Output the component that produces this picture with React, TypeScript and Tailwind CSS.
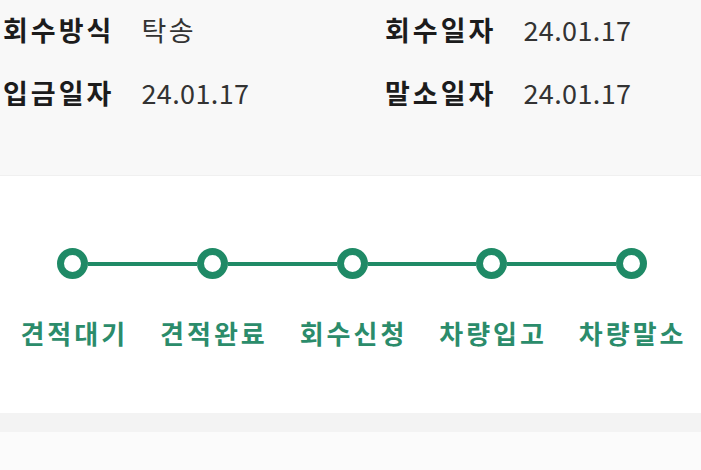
import React from "react";

const steps = ["견적대기", "견적완료", "회수신청", "차량입고", "차량말소"];

function InfoItem({ label, value }: { label: string; value: string }) {
  return (
    <div className="flex items-center gap-[27px] h-[40px]">
      <span className="font-bold text-[#1c1c1c] tracking-[3px]">{label}</span>
      <span className="font-normal text-[#333333] tracking-[2.5px] [&.num]:tracking-[0.4px]">{value}</span>
    </div>
  );
}

function InfoNum({ label, value }: { label: string; value: string }) {
  return (
    <div className="flex items-center gap-[27px] h-[40px]">
      <span className="font-bold text-[#1c1c1c] tracking-[3px]">{label}</span>
      <span className="font-normal text-[#333333] tracking-[0.4px]">{value}</span>
    </div>
  );
}

export default function App() {
  return (
    <div
      className="w-[701px] h-[470px] overflow-hidden bg-[#fbfbfb]"
      style={{ fontFamily: '"Noto Sans CJK KR", "Noto Sans", sans-serif' }}
    >
      <div className="h-[175px] bg-[#f8f8f8] pt-[10px] text-[27px] leading-[40px]">
        <div className="grid grid-cols-[382px_1fr] gap-y-[23px] pl-[3px]">
          <InfoItem label="회수방식" value="탁송" />
          <InfoNum label="회수일자" value="24.01.17" />
          <InfoNum label="입금일자" value="24.01.17" />
          <InfoNum label="말소일자" value="24.01.17" />
        </div>
      </div>
      <div className="h-[238px] bg-white border-t border-[#f0f0f0] pt-[72px]">
        <div className="grid grid-cols-5 pl-[3px]">
          {steps.map((s, i) => (
            <div key={s} className="flex flex-col items-center">
              <div className="flex items-center w-full">
                <div className={`flex-1 h-[4px] ${i === 0 ? "bg-transparent" : "bg-[#1f8a66]"}`} />
                <div className="w-[31px] h-[31px] rounded-full border-[7px] border-[#1f8a66] bg-white shrink-0" />
                <div className={`flex-1 h-[4px] ${i === steps.length - 1 ? "bg-transparent" : "bg-[#1f8a66]"}`} />
              </div>
              <div className="mt-[36px] text-[26px] leading-[36px] font-bold text-[#2b8c6b] tracking-[3px] pl-[3px]">{s}</div>
            </div>
          ))}
        </div>
      </div>
      <div className="h-[19px] bg-[#f3f3f3]" />
    </div>
  );
}
